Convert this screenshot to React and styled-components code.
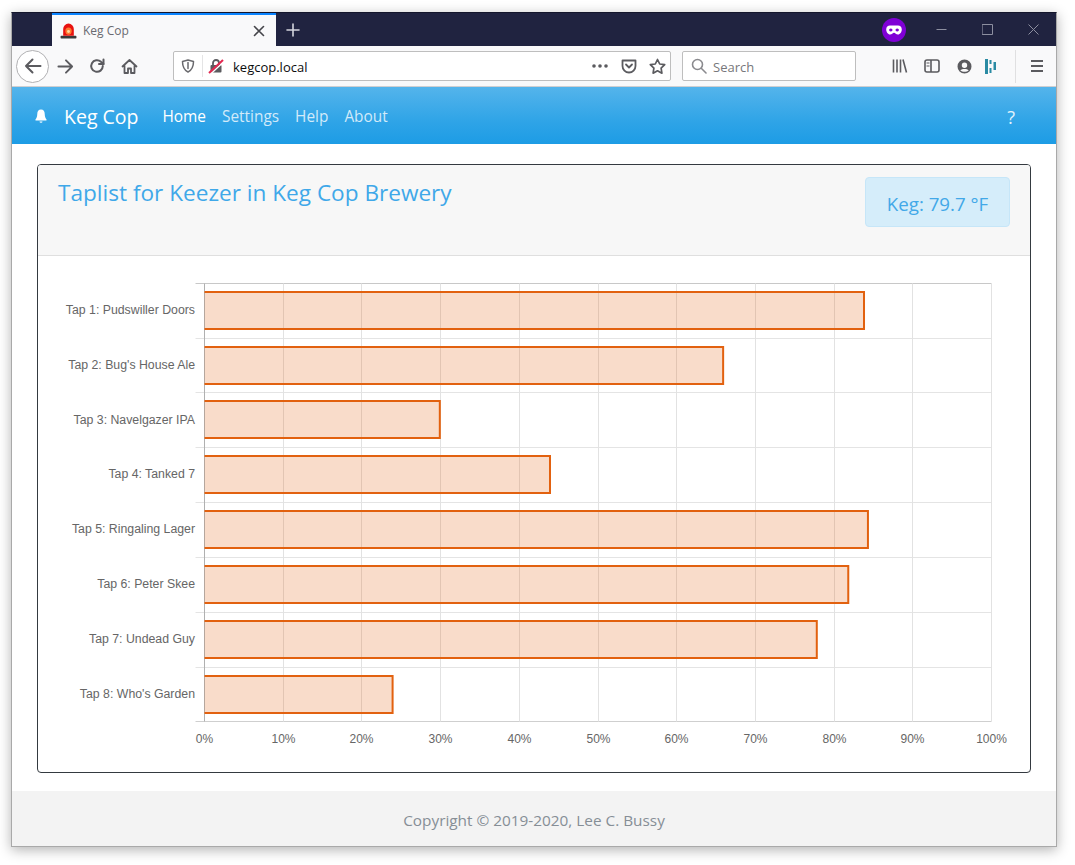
import React from 'react'
import styled, { createGlobalStyle } from 'styled-components'

const GlobalStyle = createGlobalStyle`
  html, body { margin: 0; padding: 0; background: #fff; }
  body { font-family: "Open Sans", "Noto Sans", sans-serif; }
  #root {
    width: 100vw;
    height: 100vh;
    box-sizing: border-box;
    padding: 12px 0 0 11px;
    overflow: hidden;
  }
`

const Frame = styled.div`
  width: 1044px;
  height: 833px;
  border: 1px solid #a9a9a9;
  border-top-color: #14162c;
  box-shadow: 0 3px 12px rgba(0,0,0,0.3);
  display: flex;
  flex-direction: column;
  background: #fff;
`

/* browser chrome */
const TabStrip = styled.div`
  height: 33px;
  flex: none;
  background: #202340;
  display: flex;
  align-items: stretch;
  padding-left: 40px;
`
const Tab = styled.div`
  width: 224px;
  box-sizing: border-box;
  background: #f9f9fa;
  border-top: 2px solid #0a84ff;
  display: flex;
  align-items: center;
  padding: 0 11px 0 8px;
  font-size: 12px;
  color: #6a6a70;
`
const TabTitle = styled.span`
  flex: 1;
  margin-left: 6px;
`
const NewTab = styled.div`
  width: 34px;
  display: flex;
  align-items: center;
  justify-content: center;
`
const StripSpacer = styled.div`
  flex: 1;
`
const Mask = styled.div`
  width: 24px;
  height: 24px;
  margin: 5px 12px 0 0;
  border-radius: 50%;
  background: #7f00d6;
  display: flex;
  align-items: center;
  justify-content: center;
`
const WinButton = styled.div`
  width: 46px;
  display: flex;
  align-items: center;
  justify-content: center;
`
const Toolbar = styled.div`
  height: 40px;
  flex: none;
  background: #f9f9fa;
  border-bottom: 1px solid #cfcfd1;
  display: flex;
  align-items: center;
  padding-left: 4px;
`
const BackButton = styled.div`
  width: 31px;
  height: 31px;
  border: 1px solid #b1b1b3;
  border-radius: 50%;
  background: #fff;
  display: flex;
  align-items: center;
  justify-content: center;
  flex: none;
`
const ToolButton = styled.div`
  width: ${p => p.$w || 32}px;
  display: flex;
  align-items: center;
  justify-content: center;
  flex: none;
`
const LibraryButton = styled(ToolButton)`
  margin-left: 28px;
`
const InputBox = styled.div`
  height: 28px;
  background: #fff;
  border: 1px solid #bebebe;
  border-radius: 2px;
  display: flex;
  align-items: center;
  flex: none;
  font-size: 13px;
`
const UrlBar = styled(InputBox)`
  width: 496px;
  margin-left: 28px;
`
const SearchBar = styled(InputBox)`
  width: 164px;
  margin-left: 11px;
  padding-left: 8px;
  color: #77777b;
`
const UrlText = styled.span`
  flex: 1;
  color: #0c0c0d;
  margin: 2px 0 0 4px;
`
const UrlDivider = styled.div`
  width: 1px;
  height: 22px;
  background: #e4e4e5;
`
const ToolDivider = styled.div`
  width: 1px;
  height: 33px;
  background: #e0e0e1;
  margin: 0 5px 0 15px;
`
const SearchText = styled.span`
  margin: 2px 0 0 6px;
`

/* page */
const Navbar = styled.nav`
  height: 57px;
  flex: none;
  box-sizing: border-box;
  background: linear-gradient(#54b4eb, #2fa4e7 60%, #1d9ce5);
  display: flex;
  align-items: center;
  padding: 2px 41px 0 22px;
  color: #fff;
`
const BellIcon = styled.svg`
  margin-top: -2px;
`
const Brand = styled.a`
  font-size: 19.5px;
  margin: 0 24px 0 16px;
  color: #fff;
`
const NavLinks = styled.div`
  flex: 1;
  display: flex;
  gap: 16px;
`
const NavLink = styled.a`
  font-size: 15.4px;
  color: ${p => (p.$active ? '#fff' : 'rgba(255,255,255,0.78)')};
`
const Help = styled.a`
  font-size: 18px;
  color: #e4f3fc;
`
const Main = styled.main`
  flex: 1;
  padding: 20px 25px 18px;
  display: flex;
  min-height: 0;
`
const Card = styled.section`
  flex: 1;
  border: 1px solid #343a40;
  border-radius: 4px;
  display: flex;
  flex-direction: column;
  overflow: hidden;
`
const CardHeader = styled.header`
  height: 90px;
  flex: none;
  background: #f7f7f7;
  border-bottom: 1px solid #dfdfdf;
  display: flex;
  justify-content: space-between;
  align-items: flex-start;
  padding: 0 20px;
`
const Title = styled.h3`
  margin: 12px 0 0;
  font-size: 22.6px;
  line-height: 32px;
  font-weight: 400;
  color: #3fa8e9;
`
const TempAlert = styled.div`
  width: 145px;
  height: 50px;
  margin-top: 12px;
  box-sizing: border-box;
  background: #d5edfa;
  border: 1px solid #c6e6f8;
  border-radius: 4px;
  color: #42a8e8;
  font-size: 18.7px;
  display: flex;
  align-items: center;
  justify-content: center;
  padding-top: 3px;
`
const CardBody = styled.div`
  flex: 1;
  min-height: 0;
`
const ChartSvg = styled.svg`
  display: block;
  width: 992px;
  height: 516px;
  font-family: "Liberation Sans", Arial, sans-serif;
  font-size: 12px;
  fill: #666;
`
const TapLabel = styled.text`
  font-size: 12.3px;
  text-anchor: end;
`
const TickLabel = styled.text`
  text-anchor: middle;
`
const Footer = styled.footer`
  height: 55px;
  flex: none;
  background: #f3f3f3;
  color: #868e96;
  font-size: 15.35px;
  display: flex;
  align-items: center;
  justify-content: center;
  padding-top: 3px;
  box-sizing: border-box;
`

const Glyph = ({ size = 18, box = 18, color = '#5b5b5f', sw = 2, children }) => (
  <svg width={size} height={size} viewBox={`0 0 ${box} ${box}`} fill="none" stroke={color} strokeWidth={sw} strokeLinecap="round" strokeLinejoin="round">
    {children}
  </svg>
)

const taps = [
  ['Tap 1: Pudswiller Doors', 83.8],
  ['Tap 2: Bug\'s House Ale', 65.9],
  ['Tap 3: Navelgazer IPA', 29.9],
  ['Tap 4: Tanked 7', 43.9],
  ['Tap 5: Ringaling Lager', 84.3],
  ['Tap 6: Peter Skee', 81.8],
  ['Tap 7: Undead Guy', 77.8],
  ['Tap 8: Who\'s Garden', 23.9],
]

// chart coordinates are relative to the card body
const LEFT = 166.5
const TOP = 27
const WIDTH = 787
const ROW = 54.83
const rowY = i => Math.floor(TOP + ROW * i + 0.3)
const BOTTOM = rowY(taps.length) + 0.5

const TapChart = () => (
  <ChartSvg viewBox="0 0 992 516">
    {taps.map((_, i) => (
      <line key={i} x1={LEFT - 9} x2={LEFT + WIDTH} y1={rowY(i) + 0.5} y2={rowY(i) + 0.5} stroke={i === 0 ? '#c8c8c8' : '#e4e4e4'} />
    ))}
    <line x1={LEFT - 9} x2={LEFT + WIDTH} y1={BOTTOM} y2={BOTTOM} stroke="#cfcfcf" />
    {[...Array(11).keys()].map(i => {
      const x = Math.round(LEFT + (WIDTH * i) / 10 - 0.5) + 0.5
      return (
        <g key={i}>
          <line x1={x} x2={x} y1={TOP + 0.5} y2={BOTTOM} stroke={i === 0 ? '#b0b0b0' : '#e2e2e2'} />
          <TickLabel x={x} y={BOTTOM + 21}>{i * 10}%</TickLabel>
        </g>
      )
    })}
    {taps.map(([name, pct], i) => {
      const top = rowY(i) + 9
      const right = LEFT + (WIDTH * pct) / 100
      const h = 37
      return (
        <g key={name}>
          <rect x={LEFT} y={top} width={right - LEFT} height={h} fill="#e2610f" fillOpacity="0.22" stroke="none" />
          <path d={`M${LEFT} ${top}H${right}V${top + h}H${LEFT}`} fill="none" stroke="#e2610f" strokeWidth="2" />
          <TapLabel x={157} y={Math.floor(TOP + ROW * (i + 0.5) + 4)}>{name}</TapLabel>
        </g>
      )
    })}
  </ChartSvg>
)

export default function App() {
  return (
    <>
      <GlobalStyle />
      <Frame>
        <TabStrip>
          <Tab>
            <svg width="17" height="17" viewBox="0 0 16 16">
              <rect x="0.5" y="13" width="15" height="2.5" rx="0.8" fill="#3a3a3a" />
              <path d="M3 13V6.500a5 5 0 0 1 10 0V13z" fill="#e8120f" />
              <ellipse cx="8" cy="8.500" rx="3" ry="3.400" fill="#ff7a30" />
              <circle cx="8" cy="9" r="1.400" fill="#ffd9a0" />
            </svg>
            <TabTitle>Keg Cop</TabTitle>
            <Glyph size={12} box={12} color="#45454a" sw={1.6}><path d="M1.500 1.500l9 9M10.500 1.500l-9 9" /></Glyph>
          </Tab>
          <NewTab>
            <Glyph size={14} box={14} color="#d4d5dd" sw={1.6}><path d="M7 1v12M1 7h12" /></Glyph>
          </NewTab>
          <StripSpacer />
          <Mask>
            <svg width="16" height="10" viewBox="0 0 16 10">
              <path fillRule="evenodd" fill="#fff" d="M4 .5h8c2.200 0 3.800 1.600 3.800 4S14 9.500 12 9.500c-2 0-2.600-1.800-4-1.800S6 9.500 4 9.500C2 9.500.2 6.900.2 4.500S1.800.5 4 .5zM4.800 3.400a1.700 1.500 0 1 0 .01 0zm6.400 0a1.700 1.500 0 1 0 .01 0z" />
            </svg>
          </Mask>
          <WinButton><Glyph size={11} box={11} color="#8d8fa0" sw={1}><path d="M.5 5.500h10" strokeLinecap="butt" /></Glyph></WinButton>
          <WinButton><Glyph size={11} box={11} color="#8d8fa0" sw={1}><rect x=".5" y=".5" width="10" height="10" /></Glyph></WinButton>
          <WinButton><Glyph size={11} box={11} color="#8d8fa0" sw={1}><path d="M.5 .5l10 10M10.500 .5l-10 10" strokeLinecap="butt" /></Glyph></WinButton>
        </TabStrip>
        <Toolbar>
          <BackButton>
            <Glyph><path d="M16.500 9H2M8.500 2.500L2 9l6.500 6.500" /></Glyph>
          </BackButton>
          <ToolButton>
            <Glyph size={17}><path d="M1.500 9H16M9.500 2.500L16 9l-6.500 6.500" /></Glyph>
          </ToolButton>
          <ToolButton>
            <Glyph size={16} box={16}><path d="M13.800 8a5.800 5.800 0 1 1-1.800-4.200L14.500 6" /><path d="M14.500 1.500V6H10" /></Glyph>
          </ToolButton>
          <ToolButton>
            <Glyph size={17} box={17} sw={1.8}><path d="M1.500 8.500L8.500 2l7 6.500M3.500 7.500V15H7v-4.500h3V15h3.500V7.500" /></Glyph>
          </ToolButton>
          <UrlBar>
            <ToolButton $w={28}>
              <Glyph size={14} box={14} color="#6a6a6e" sw={1.5}><path d="M7 1l5.500 1.500c0 5-1.500 8.500-5.500 10.500C3 11 1.500 7.500 1.500 2.500zM7 3.500v6" /></Glyph>
            </ToolButton>
            <UrlDivider />
            <ToolButton $w={26}>
              <svg width="16" height="16" viewBox="0 0 16 16">
                <path d="M5 7V5a3 3 0 0 1 6 0v2" fill="none" stroke="#5b5b5f" strokeWidth="1.8" />
                <rect x="2.500" y="7" width="11" height="7.500" rx="1" fill="#5b5b5f" />
                <path d="M2 16.500L16 3.500" stroke="#fff" strokeWidth="1.5" />
                <path d="M1 15L15 2" stroke="#e22850" strokeWidth="2" />
              </svg>
            </ToolButton>
            <UrlText>kegcop.local</UrlText>
            <ToolButton $w={28}>
              <svg width="16" height="4" viewBox="0 0 16 4">
                <circle cx="2" cy="2" r="1.800" fill="#5b5b5f" /><circle cx="8" cy="2" r="1.800" fill="#5b5b5f" /><circle cx="14" cy="2" r="1.800" fill="#5b5b5f" />
              </svg>
            </ToolButton>
            <ToolButton $w={30}>
              <Glyph size={16} box={16} sw={1.8}><path d="M1.500 2.500h13V8a6.500 6.500 0 0 1-13 0zM5 6.500l3 3 3-3" /></Glyph>
            </ToolButton>
            <ToolButton $w={26}>
              <Glyph size={17} box={17} sw={1.7}><path d="M8.500 1.500l2.200 4.500 5 .7-3.600 3.500.8 5-4.400-2.400-4.400 2.400.8-5L1.300 6.700l5-.7z" /></Glyph>
            </ToolButton>
          </UrlBar>
          <SearchBar>
            <Glyph size={16} box={16} color="#8a8a8e" sw={1.6}><circle cx="6.500" cy="6.500" r="5" /><path d="M10.500 10.500l4.500 4.500" /></Glyph>
            <SearchText>Search</SearchText>
          </SearchBar>
          <LibraryButton>
            <Glyph size={16} box={16} sw={1.6}><path d="M1.500 1.500v13M5 1.500v13M8.500 1.500v13M11 1.500l3.500 13" strokeLinecap="butt" /></Glyph>
          </LibraryButton>
          <ToolButton>
            <svg width="16" height="14" viewBox="0 0 16 14" fill="none">
              <rect x="1" y="1" width="14" height="12" rx="2" stroke="#5b5b5f" strokeWidth="1.6" />
              <path d="M7 1v12" stroke="#5b5b5f" strokeWidth="1.6" />
              <path d="M2.500 4H5.500M2.500 7H5.500" stroke="#5b5b5f" strokeWidth="1.2" />
            </svg>
          </ToolButton>
          <ToolButton>
            <svg width="15" height="15" viewBox="0 0 15 15">
              <path fillRule="evenodd" fill="#5b5b5f" d="M7.500 .5a7 7 0 1 1 0 14 7 7 0 0 1 0-14zM7.500 3.500a2.700 2.700 0 1 0 0 5.400 2.700 2.700 0 0 0 0-5.400zM3.300 11.200c2 2.100 6.400 2.100 8.400 0-2-1.700-6.400-1.700-8.400 0z" />
            </svg>
          </ToolButton>
          <ToolButton $w={20}>
            <svg width="11" height="15" viewBox="0 0 11 15" fill="#2a8ba3">
              <rect x="0" y="0" width="3" height="15" />
              <rect x="4.500" y="1" width="2" height="4" />
              <rect x="4.500" y="9" width="2" height="5" />
              <rect x="8.500" y="3" width="2.500" height="8" />
            </svg>
          </ToolButton>
          <ToolDivider />
          <ToolButton>
            <Glyph size={14} box={14} sw={1.8}><path d="M1 2h12M1 7h12M1 12h12" strokeLinecap="butt" /></Glyph>
          </ToolButton>
        </Toolbar>
        <Navbar>
          <BellIcon width="14" height="14" viewBox="0 0 14 14" fill="#fff">
            <path d="M7 .5c2.600 0 3.600 2 3.700 4.200.1 2.800.8 4.400 1.800 5.800.3.5 0 1-.6 1H2.100c-.6 0-.9-.5-.6-1 1-1.400 1.700-3 1.800-5.800C3.400 2.500 4.400.5 7 .5z" />
            <path d="M5.500 12.500h3a1.500 1.200 0 0 1-3 0z" />
          </BellIcon>
          <Brand>Keg Cop</Brand>
          <NavLinks>
            <NavLink $active>Home</NavLink>
            <NavLink>Settings</NavLink>
            <NavLink>Help</NavLink>
            <NavLink>About</NavLink>
          </NavLinks>
          <Help>?</Help>
        </Navbar>
        <Main>
          <Card>
            <CardHeader>
              <Title>Taplist for Keezer in Keg Cop Brewery</Title>
              <TempAlert>Keg: 79.7 °F</TempAlert>
            </CardHeader>
            <CardBody>
              <TapChart />
            </CardBody>
          </Card>
        </Main>
        <Footer>Copyright © 2019-2020, Lee C. Bussy</Footer>
      </Frame>
    </>
  )
}
